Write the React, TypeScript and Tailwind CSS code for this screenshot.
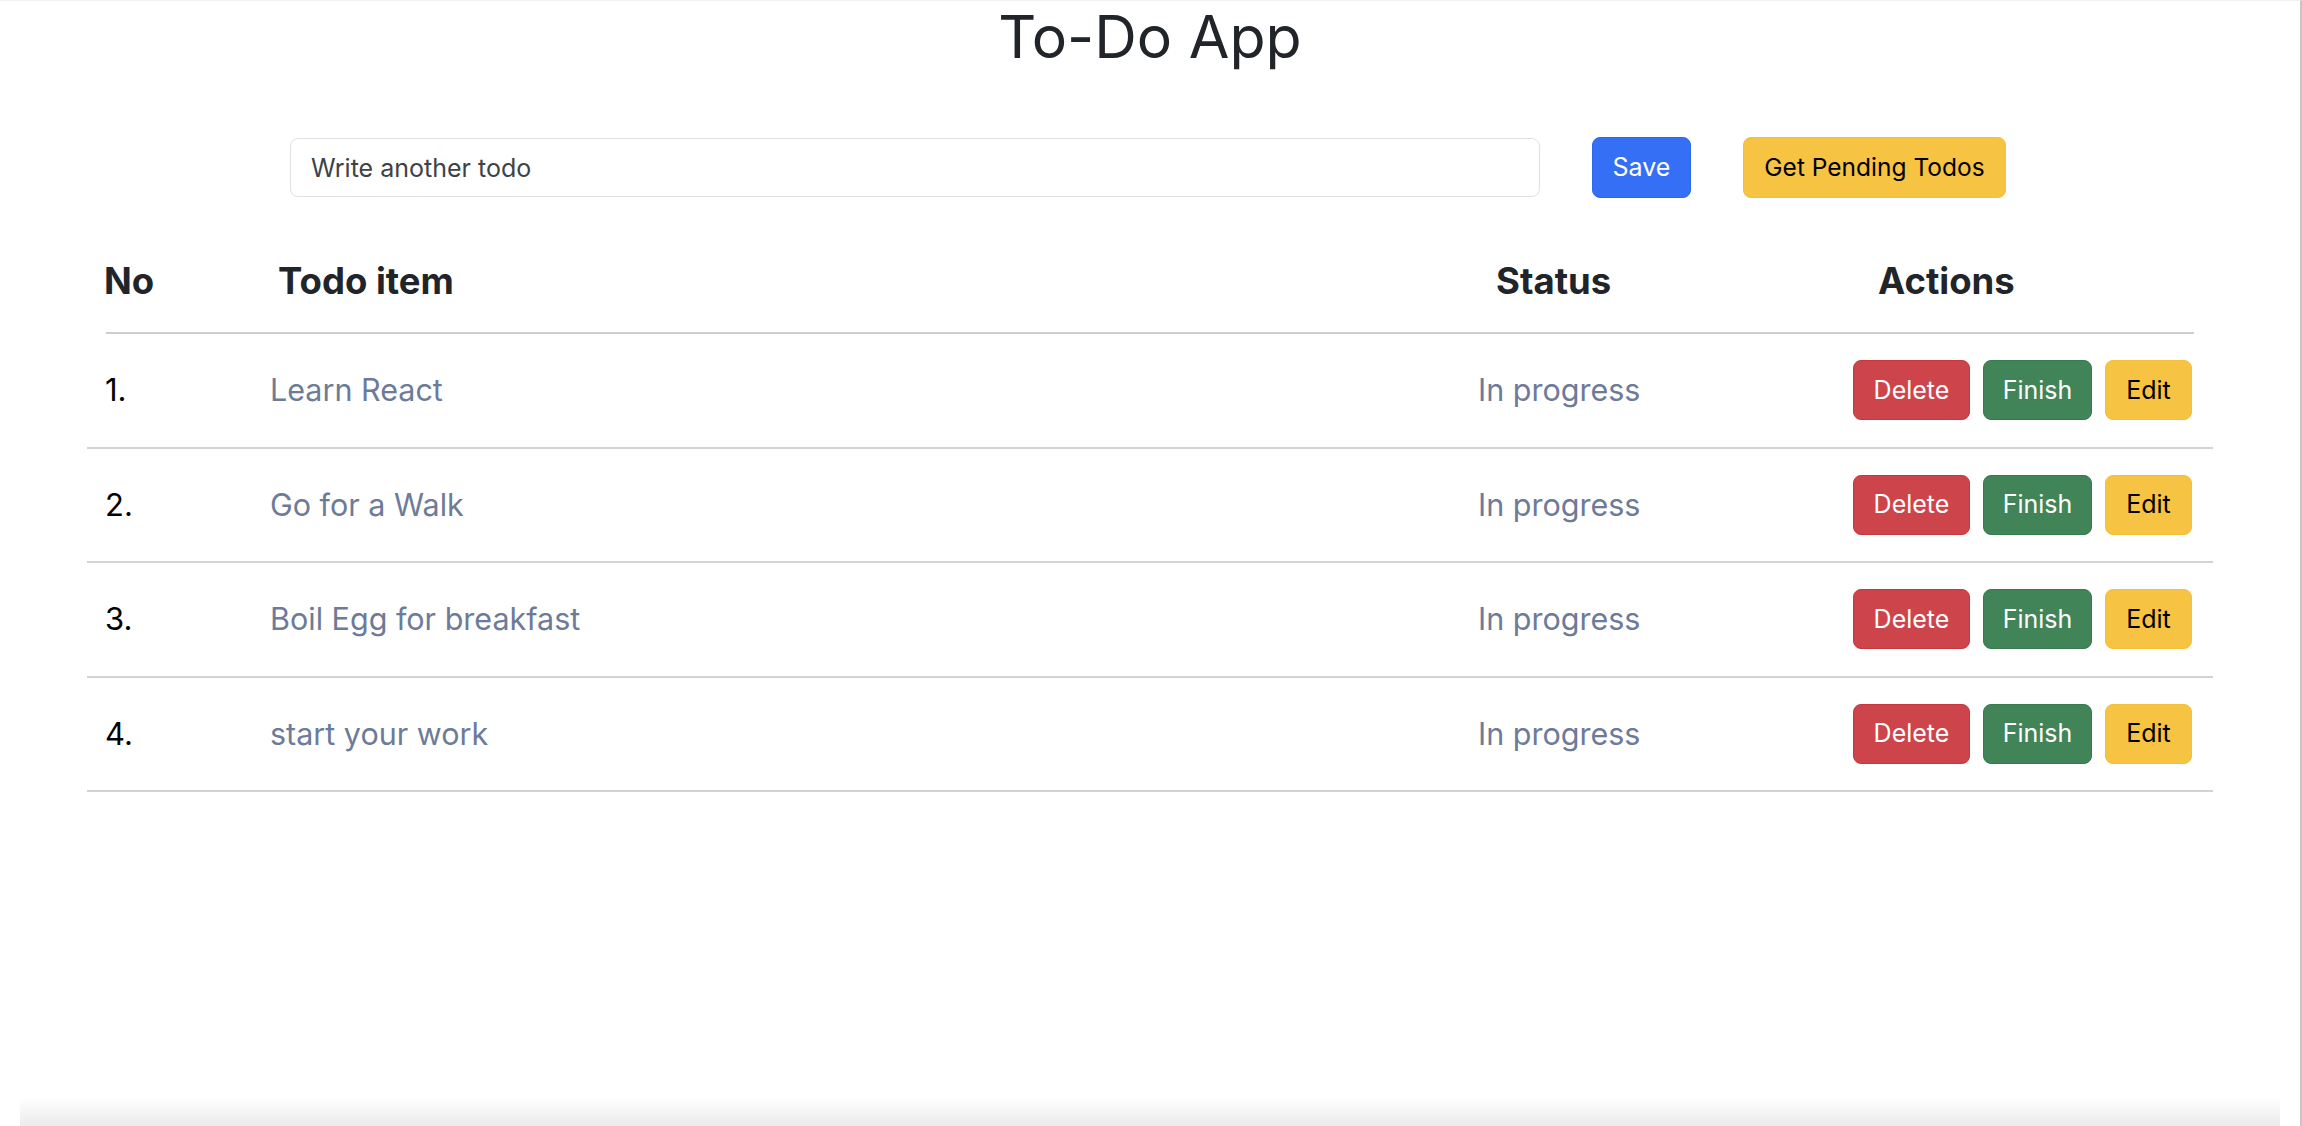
import React from "react";

type Todo = { id: number; title: string; status: string };

const todos: Todo[] = [
    { id: 1, title: "Learn React", status: "In progress" },
    { id: 2, title: "Go for a Walk", status: "In progress" },
    { id: 3, title: "Boil Egg for breakfast", status: "In progress" },
    { id: 4, title: "start your work", status: "In progress" },
];

const App: React.FC = () => {
    return (
        <div className="h-[1126px] w-full flex flex-col bg-white border-t border-[#efefef] border-r-2 border-r-[#c6c6c6] text-[#212529] font-['Inter','Noto_Sans',sans-serif] overflow-hidden">
            <main className="flex-1 flex flex-col">
                <h1 className="text-center text-[59px] leading-[72px] font-normal text-[#212529]">To-Do App</h1>

                {/* input row */}
                <div className="mt-[64px] flex items-center justify-center gap-[52px] pr-[4px]">
                    <input
                        type="text"
                        placeholder="Write another todo"
                        className="w-[1250px] h-[59px] rounded-[8px] border border-[#dee2e6] px-[20px] text-[25px] text-[#212529] placeholder:text-[#3d4247] outline-none"
                    />
                    <button className="w-[99px] h-[61px] rounded-[8px] bg-[#356ff5] border border-[#2f66ea] text-white text-[25px]">Save</button>
                    <button className="w-[263px] h-[61px] rounded-[8px] bg-[#f6c343] border border-[#f4bf3a] text-black text-[24.5px]">Get Pending Todos</button>
                </div>

                {/* table */}
                <div className="mt-[60px] mx-auto w-[2126px]">
                    <div className="mx-[19px] grid grid-cols-[172px_1218px_382px_1fr] text-[36.5px] leading-[46px] font-bold text-[#212529] pb-[28px] border-b-2 border-[#cdcdcd]">
                        <div className="-ml-[2px]">No</div>
                        <div>Todo item</div>
                        <div>Status</div>
                        <div>Actions</div>
                    </div>
                    {todos.map((todo) => (
                        <div key={todo.id} className="h-[114.5px] grid grid-cols-[165px_1208px_374px_1fr] items-center pl-[18px] pr-[21px] border-b-2 border-[#d3d3d3]">
                            <div className="text-[31px] text-black">{todo.id}.</div>
                            <div className="text-[30.5px] text-[#6d7b99]">{todo.title}</div>
                            <div className="text-[30.5px] text-[#6d7b99]">{todo.status}</div>
                            <div className="flex justify-end gap-[13px]">
                                <button className="w-[117px] h-[60px] rounded-[8px] bg-[#cd444b] border border-[#c8363e] text-white text-[25px]">Delete</button>
                                <button className="w-[109px] h-[60px] rounded-[8px] bg-[#418458] border border-[#377a4e] text-white text-[25px]">Finish</button>
                                <button className="w-[87px] h-[60px] rounded-[8px] bg-[#f6c343] border border-[#f4bf3a] text-black text-[25px]">Edit</button>
                            </div>
                        </div>
                    ))}
                </div>
            </main>
            <div className="h-[28px] mx-[20px] bg-linear-to-b from-white to-[#ebebeb]"></div>
        </div>
    );
};

export default App;
